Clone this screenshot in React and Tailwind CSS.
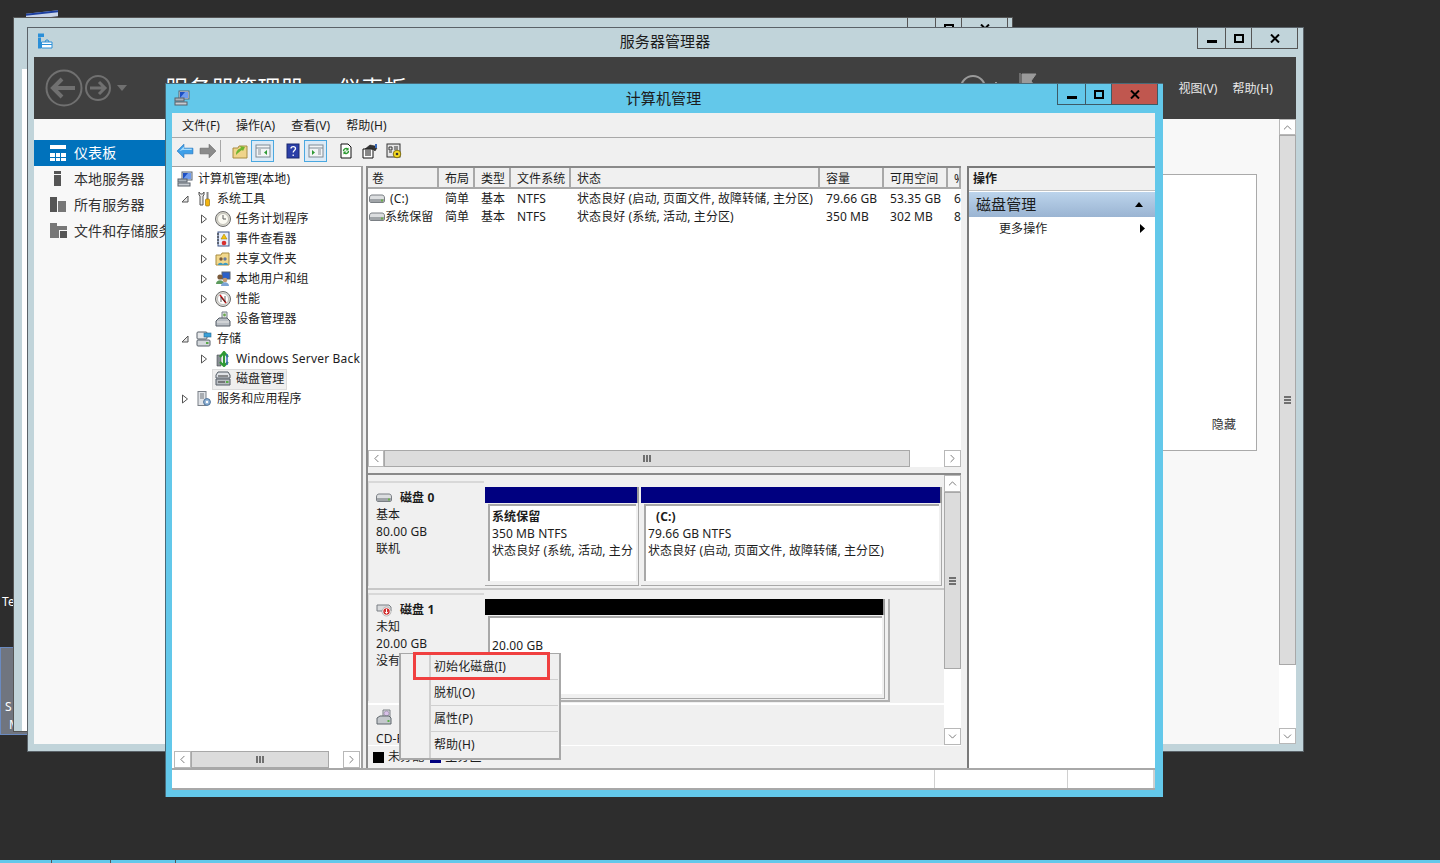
import { ChevronLeft, ChevronRight, ChevronUp, ChevronDown } from 'lucide-react'

const font = { fontFamily: '"Noto Sans", "Noto Sans CJK SC", sans-serif' }

const Svg = ({ size = 16, children, className = '' }) => (
  <svg width={size} height={size} viewBox="0 0 16 16" className={`shrink-0 ${className}`}>
    {children}
  </svg>
)

const ComputerIcon = () => (
  <Svg>
    <rect x="5" y="1" width="10" height="8" fill="#dfe6ee" stroke="#5a6470" />
    <rect x="6" y="2" width="8" height="6" fill="#1d4fc4" />
    <path d="M6 8l5-6h3v6z" fill="#6f9cf0" />
    <rect x="1" y="8" width="9" height="3" fill="#aab2ba" stroke="#59616a" />
    <rect x="1" y="12" width="12" height="3" fill="#c7ccd2" stroke="#59616a" />
  </Svg>
)
const ToolsIcon = () => (
  <Svg>
    <path d="M3 1v3l1 1v9h3V5l1-1V1L6.500 3h-2z" fill="#e8e8e8" stroke="#555" />
    <rect x="10.500" y="1" width="2" height="7" fill="#888" />
    <rect x="9.500" y="8" width="4" height="7" rx="1" fill="#f2b410" stroke="#8a6400" strokeWidth="0.6" />
  </Svg>
)
const ClockIcon = () => (
  <Svg>
    <circle cx="8" cy="8" r="7.500" fill="#d8d6cc" stroke="#6c6c6c" />
    <circle cx="8" cy="8" r="5.500" fill="#fbfaf2" stroke="#a8a8a0" strokeWidth="0.6" />
    <path d="M8 4v4h3" fill="none" stroke="#5c5c5c" />
  </Svg>
)
const EventIcon = () => (
  <Svg>
    <rect x="3" y="1" width="11" height="14" fill="#e8eefa" stroke="#3c5488" />
    <path d="M2 3h2M2 6h2M2 9h2M2 12h2" stroke="#222" />
    <path d="M9 3l3 5H6z" fill="#f4c20d" stroke="#9a7700" strokeWidth="0.5" />
    <circle cx="9" cy="12" r="2.300" fill="#d83030" />
  </Svg>
)
const ShareIcon = () => (
  <Svg>
    <path d="M1 4h5l1-2h7v12H1z" fill="#f2d88c" stroke="#a88c40" />
    <circle cx="6" cy="8" r="1.700" fill="#7a5a3a" />
    <circle cx="10" cy="8" r="1.700" fill="#6a7a9a" />
    <path d="M3 14c0-3 5-3 5 0zM8 14c0-3 5-3 5 0z" fill="#3f9ac0" />
  </Svg>
)
const UsersIcon = () => (
  <Svg>
    <rect x="7" y="1" width="8" height="7" fill="#2a5fc8" stroke="#5a6470" />
    <circle cx="5" cy="6" r="2.600" fill="#7a5a3a" />
    <path d="M1 13c0-5 8-5 8 0z" fill="#5d9a5d" />
    <circle cx="10" cy="9" r="2.300" fill="#c59a70" />
    <path d="M6 15c0-5 8-5 8 0z" fill="#7da4d4" />
  </Svg>
)
const PerfIcon = () => (
  <Svg>
    <circle cx="8" cy="8" r="7.500" fill="#dcdad4" stroke="#6a6a6a" />
    <circle cx="8" cy="8" r="5.500" fill="#fff" stroke="#a0a0a0" strokeWidth="0.6" />
    <path d="M5 4l6 8" stroke="#d01818" strokeWidth="1.600" />
    <path d="M6 11V6l4 5V5" fill="none" stroke="#222" strokeWidth="0.7" />
  </Svg>
)
const DeviceIcon = () => (
  <Svg>
    <path d="M7 1h5v7H7z" fill="#e4e6e8" stroke="#74808a" />
    <circle cx="9.500" cy="4" r="1.400" fill="#6aa84f" />
    <path d="M1 10l3-3h8l3 3v5H1z" fill="#b9bec4" stroke="#555d66" />
    <path d="M2 11h12" stroke="#e8e8e8" />
  </Svg>
)
const StorageIcon = () => (
  <Svg>
    <rect x="1" y="1" width="10" height="7" rx="1" fill="#e6e8ea" stroke="#59616a" />
    <rect x="8" y="2" width="7" height="4" fill="#3aa0d8" stroke="#2a6a90" strokeWidth="0.6" />
    <rect x="1" y="9" width="13" height="6" rx="1" fill="#d4d8dc" stroke="#59616a" />
    <rect x="10" y="11" width="2.500" height="2" fill="#58a848" />
  </Svg>
)
const BackupIcon = () => (
  <Svg>
    <path d="M2 4h4v11H2z" fill="#8a8f96" stroke="#44494f" strokeWidth="0.6" />
    <path d="M9 1v14M5 6l4-5 4 5M5 11l4 4 4-4" fill="none" stroke="#2f9a35" strokeWidth="2.200" />
    <path d="M12 3v11" stroke="#3868b8" strokeWidth="1.500" />
  </Svg>
)
const DiskMgmtIcon = () => (
  <Svg>
    <path d="M3 1h10l2 3v3H1V4z" fill="#dfe2e6" stroke="#555d66" />
    <path d="M1 8h14v6H1z" fill="#b9bdc2" stroke="#555d66" />
    <path d="M3 5h10M3 11h7" stroke="#333" />
    <rect x="11" y="10" width="2.500" height="2" fill="#5ab04a" />
  </Svg>
)
const ServicesIcon = () => (
  <Svg>
    <rect x="2" y="0.500" width="8" height="14" fill="#e0e3e7" stroke="#7a8088" />
    <path d="M4 3h4M4 5h4M4 7h4" stroke="#70767c" />
    <circle cx="11" cy="11" r="3.400" fill="#8fb2d6" stroke="#4d7298" />
    <circle cx="11" cy="11" r="1.200" fill="#fff" />
  </Svg>
)
const DriveIcon = ({ className = '' }) => (
  <Svg className={className}>
    <path d="M3 4h10c1.500 0 2.500 1 2.500 3v3c0 1-.5 1.500-1.500 1.500H2c-1 0-1.500-.5-1.500-1.500V7C.5 5 1.500 4 3 4z" fill="#dcdee0" stroke="#7a7f84" />
    <path d="M1 8h14v3H1z" fill="#a0a4a8" />
    <rect x="12" y="8.500" width="2" height="2" fill="#6ab04a" />
  </Svg>
)
const UnknownDiskIcon = () => (
  <Svg>
    <path d="M1 3h12l2 2v4H1z" fill="#d8dadc" stroke="#7a7f84" />
    <circle cx="10.500" cy="9.500" r="4.500" fill="#fff" stroke="#8a8a8a" strokeWidth="0.6" />
    <circle cx="10.500" cy="9.500" r="3.200" fill="#d02a2a" />
    <path d="M10.500 7v4M9 9.800l1.500 1.700 1.500-1.700" fill="none" stroke="#fff" />
  </Svg>
)
const CdIcon = () => (
  <Svg>
    <path d="M7 1h7v8H7z" fill="#e4e6e8" stroke="#7a7f84" />
    <circle cx="10.500" cy="4.500" r="2.500" fill="#d9c2e8" stroke="#8a7a9a" strokeWidth="0.6" />
    <path d="M1 9l3-2h9l2 2v6H1z" fill="#c4c8cc" stroke="#5f666c" />
    <rect x="11.500" y="11" width="2" height="2" fill="#5ab04a" />
  </Svg>
)

const BackArrow = () => (
  <Svg size={18}>
    <path d="M1 8l6-6v3.500h8v5H7V14z" fill="#3f9fe8" stroke="#1c71bd" strokeWidth="0.6" />
    <path d="M3 8l4-4v2h7v1H6z" fill="#a8dcfb" />
  </Svg>
)
const ForwardArrow = () => (
  <Svg size={18}>
    <path d="M15 8L9 2v3.500H1v5h8V14z" fill="#8b8b8b" stroke="#666" strokeWidth="0.6" />
  </Svg>
)
const UpFolder = () => (
  <Svg>
    <path d="M1 5h5l1-2h8v12H1z" fill="#f0d48a" stroke="#a88c40" />
    <path d="M4 12c0-4 2-6 5-7l-1-2 5 1-2 4-1-1c-2 1-4 3-6 5z" fill="#6eb52f" />
  </Svg>
)
const PaneIcon = ({ arrow }) => (
  <svg width="16" height="16" viewBox="0 0 16 16">
    <rect x="1" y="2" width="14" height="12" fill="#f2f4f6" stroke="#7f8a94" />
    <path d="M1 5h14" stroke="#7f8a94" />
    <path d={arrow === 'left' ? 'M3 7h3M3 9h3M3 11h3' : 'M10 7h3M10 9h3M10 11h3'} stroke="#8a8f96" />
    <path d={arrow === 'left' ? 'M12 7v5l-3-2.500z' : 'M4 7v5l3-2.500z'} fill="#2f9a35" />
  </svg>
)
const HelpBook = () => (
  <Svg>
    <rect x="2" y="1" width="12" height="14" fill="#2b3fa8" stroke="#1a2870" />
    <path d="M6 5.500c0-2.500 4.500-2.500 4.500 0 0 2-2.300 2-2.300 4M8.200 11.500v1.500" fill="none" stroke="#fff" strokeWidth="1.300" />
  </Svg>
)
const RefreshPage = () => (
  <Svg>
    <path d="M3 1h7l3 3v11H3z" fill="#fff" stroke="#111" />
    <path d="M5.500 8a2.500 2.500 0 0 1 4.500-1.500M10.500 8A2.500 2.500 0 0 1 6 9.500" fill="none" stroke="#2c9a30" strokeWidth="1.400" />
    <path d="M10.500 4.500v3h-3zM5.500 11.500v-3h3z" fill="#2c9a30" />
  </Svg>
)
const PropsIcon = () => (
  <Svg>
    <path d="M1 6h10v9H1z" fill="#fff" stroke="#111" />
    <path d="M3 8h6M3 10h6M3 12h6" stroke="#111" />
    <path d="M3 6l5-4 5 1 2 2-2 3-2-2z" fill="#333" stroke="#111" strokeWidth="0.5" />
    <rect x="13" y="1" width="2" height="4" fill="#3868b8" />
  </Svg>
)
const ExportIcon = () => (
  <Svg>
    <rect x="1" y="1" width="13" height="13" fill="#e6e6e6" stroke="#333" />
    <path d="M3 4h3v3H3zM8 4h4M8 6h4M3 9h3" stroke="#333" fill="none" />
    <circle cx="11" cy="11" r="3.800" fill="#f4d820" stroke="#6c5c00" strokeWidth="0.8" />
    <circle cx="11" cy="11" r="1.300" fill="#333" />
  </Svg>
)

const ServerToolboxIcon = () => (
  <Svg>
    <rect x="1" y="0.500" width="6" height="3.500" fill="#2a8fd8" />
    <rect x="1" y="4.500" width="3" height="11" fill="#2a8fd8" />
    <path d="M4.500 9h10.500v6H4.500z" fill="#fff" stroke="#2a8fd8" />
    <path d="M8 9l1-2h2l1 2M4.500 11.500h10.500" fill="none" stroke="#2a8fd8" />
  </Svg>
)

const Triangle = ({ open }) =>
  open ? (
    <svg width="8" height="8" viewBox="0 0 8 8"><path d="M7 1v6H1z" fill="#e8e8e8" stroke="#555" /></svg>
  ) : (
    <svg width="8" height="10" viewBox="0 0 8 10"><path d="M1.500 1l5 4-5 4z" fill="#fff" stroke="#555" /></svg>
  )

const WinControls = ({ close = 'bg-transparent', border }) => (
  <div className={`flex h-[21px] border-x border-b ${border}`}>
    <div className={`flex w-[28px] items-end justify-center border-r pb-[5px] ${border}`}>
      <div className="h-[3px] w-[10px] bg-black" />
    </div>
    <div className={`flex w-[26px] items-center justify-center border-r ${border}`}>
      <div className="h-[9px] w-[10px] border-2 border-black" />
    </div>
    <div className={`flex w-[45px] items-center justify-center ${close}`}>
      <svg width="10" height="9" viewBox="0 0 10 9"><path d="M1 0.500l8 8M9 0.500l-8 8" stroke="#000" strokeWidth="2" /></svg>
    </div>
  </div>
)

const ScrollBtn = ({ children, className = '' }) => (
  <div className={`flex h-[16px] w-[16px] shrink-0 items-center justify-center border border-[#b8b8b8] bg-white text-[#606060] ${className}`}>
    {children}
  </div>
)

const Grip = ({ vertical }) =>
  vertical ? (
    <div className="flex flex-col gap-[1px]">
      <div className="h-[2px] w-[7px] bg-[#707070]" />
      <div className="h-[2px] w-[7px] bg-[#707070]" />
      <div className="h-[2px] w-[7px] bg-[#707070]" />
    </div>
  ) : (
    <div className="flex gap-[1px]">
      <div className="h-[7px] w-[2px] bg-[#707070]" />
      <div className="h-[7px] w-[2px] bg-[#707070]" />
      <div className="h-[7px] w-[2px] bg-[#707070]" />
    </div>
  )

const treeRows = [
  { level: 0, icon: ComputerIcon, label: '计算机管理(本地)' },
  { level: 1, arrow: 'open', icon: ToolsIcon, label: '系统工具' },
  { level: 2, arrow: 'closed', icon: ClockIcon, label: '任务计划程序' },
  { level: 2, arrow: 'closed', icon: EventIcon, label: '事件查看器' },
  { level: 2, arrow: 'closed', icon: ShareIcon, label: '共享文件夹' },
  { level: 2, arrow: 'closed', icon: UsersIcon, label: '本地用户和组' },
  { level: 2, arrow: 'closed', icon: PerfIcon, label: '性能' },
  { level: 2, icon: DeviceIcon, label: '设备管理器' },
  { level: 1, arrow: 'open', icon: StorageIcon, label: '存储' },
  { level: 2, arrow: 'closed', icon: BackupIcon, label: 'Windows Server Back' },
  { level: 2, icon: DiskMgmtIcon, label: '磁盘管理', selected: true },
  { level: 1, arrow: 'closed', icon: ServicesIcon, label: '服务和应用程序' },
]

const levelPad = { 0: 'pl-[2px]', 1: 'pl-[8px]', 2: 'pl-[27px]' }

const columns = [
  { label: '卷', width: 'w-[71px]' },
  { label: '布局', width: 'w-[36px]' },
  { label: '类型', width: 'w-[36px]' },
  { label: '文件系统', width: 'w-[60px]' },
  { label: '状态', width: 'w-[249px]' },
  { label: '容量', width: 'w-[64px]' },
  { label: '可用空间', width: 'w-[64px]' },
  { label: '%', width: 'w-[13px]' },
]

const volumes = [
  ['(C:)', '简单', '基本', 'NTFS', '状态良好 (启动, 页面文件, 故障转储, 主分区)', '79.66 GB', '53.35 GB', '6'],
  ['系统保留', '简单', '基本', 'NTFS', '状态良好 (系统, 活动, 主分区)', '350 MB', '302 MB', '8'],
]

const Partition = ({ width, barColor = 'bg-[#000080]', height = 'h-[83px]', children }) => (
  <div className={`flex shrink-0 flex-col ${width}`}>
    <div className={`h-[16px] ${barColor} border-r-2 border-[#9a9a9a]`} />
    <div className={`${height} border-r border-b border-[#a8a8a8] bg-[#f0f0f0] pl-[3px] pr-[2px] pt-[1px]`}>
      <div className="h-[calc(100%-4px)] overflow-hidden whitespace-nowrap border-t-2 border-l-2 border-[#a8a8a8] bg-white pl-[2px] leading-[17px]">
        {children}
      </div>
    </div>
  </div>
)

const DiskLabel = ({ icon, name, lines, top }) => (
  <div className={`mb-[2px] w-[116px] shrink-0 border-l border-t-2 border-[#d8d8d8] bg-[#f0f0f0] pl-[7px] pt-[6px] leading-[17px] ${top}`}>
    <div className="flex h-[17px] items-center">
      {icon}
      <span className="ml-[8px] font-bold">{name}</span>
    </div>
    {lines.map((line) => (
      <div key={line}>{line}</div>
    ))}
  </div>
)

const menuItems = ['初始化磁盘(I)', '脱机(O)', '属性(P)', '帮助(H)']

export default function App() {
  return (
    <div className="relative h-[863px] w-[1440px] overflow-hidden bg-[#2d2d2d] text-[12px] tracking-[0.1px] text-[#1c1c1c]" style={font}>
      {/* desktop leftovers */}
      <div className="absolute left-[26px] top-[12px] h-[6px] w-[32px] -skew-y-6 border-t-2 border-[#1c3fa0] bg-[#c8d4e8]" />
      <div className="absolute left-[2px] top-[593px] text-white">Te</div>
      <div className="absolute left-0 top-[647px] h-[88px] w-[30px] border border-[#6a8ac0] bg-[#70757f] pl-[4px] pt-[50px] leading-[18px] text-white">
        <div>S</div>
        <div className="pl-[4px]">M</div>
      </div>
      <div className="absolute bottom-0 left-0 flex h-[3px] w-full gap-[1px] bg-[#555]">
        <div className="w-[51px] bg-[#63c8ea]" />
        <div className="w-[58px] bg-[#63c8ea]" />
        <div className="w-[64px] bg-[#63c8ea]" />
        <div className="flex-1 bg-[#63c8ea]" />
      </div>

      {/* window behind */}
      <div className="absolute left-[13px] top-[17px] flex h-[715px] w-[1000px] flex-col border border-[#555] bg-[#c1d4da] pl-[8px]">
        <div className="ml-auto mr-[4px] w-[101px]">
          <WinControls border="border-[#555]" />
        </div>
        <div className="mt-[30px] flex-1 bg-white" />
      </div>

      {/* server manager */}
      <div className="absolute left-[27px] top-[27px] flex h-[725px] w-[1277px] flex-col border border-[#5a6268] bg-[#c1d4da] pb-[7px] pl-[6px] pr-[7px]">
        <div className="grid h-[29px] shrink-0 grid-cols-[1fr_auto_1fr]">
          <div className="flex items-start pl-[3px] pt-[5px]">
            <ServerToolboxIcon />
          </div>
          <div className="pt-[3px] text-[15px] leading-[20px]">服务器管理器</div>
          <div className="-mr-[2px] flex justify-end">
            <WinControls border="border-[#555]" />
          </div>
        </div>
        <div className="flex h-[62px] shrink-0 items-center bg-[#404040] pl-[11px] text-[#e8e8e8]">
          <svg width="38" height="38" viewBox="0 0 38 38">
            <circle cx="19" cy="19" r="17.500" fill="none" stroke="#707070" strokeWidth="2" />
            <path d="M8 19h22M17 10l-9 9 9 9" fill="none" stroke="#707070" strokeWidth="4" />
          </svg>
          <svg width="28" height="28" viewBox="0 0 28 28" className="ml-[1px]">
            <circle cx="14" cy="14" r="12" fill="none" stroke="#707070" strokeWidth="2" />
            <path d="M6 14h15M15 8l6 6-6 6" fill="none" stroke="#707070" strokeWidth="3" />
          </svg>
          <svg width="12" height="8" viewBox="0 0 12 8" className="ml-[4px]">
            <path d="M1 1h10L6 7z" fill="#707070" />
          </svg>
          <div className="ml-[37px] flex whitespace-nowrap text-[23px] leading-[30px] text-white">
            <span>服务器管理器</span>
            <span className="ml-[34px]">仪表板</span>
          </div>
          <div className="ml-auto flex items-center pr-[23px] pt-[1px]">
            <svg width="28" height="28" viewBox="0 0 28 28" className="-mt-[1px]">
              <circle cx="14" cy="14" r="12" fill="none" stroke="#9a9a9a" strokeWidth="2" />
            </svg>
            <div className="ml-[8px] h-[14px] w-[2px] bg-[#9a9a9a]" />
            <svg width="18" height="30" viewBox="0 0 18 30" className="-mt-[1px] ml-[22px]">
              <path d="M1 0v30M3 1h14l-5 7 5 7H3z" fill="#9a9a9a" stroke="#9a9a9a" />
            </svg>
            <span className="ml-[142px]">视图(V)</span>
            <span className="ml-[15px]">帮助(H)</span>
          </div>
        </div>
        <div className="flex min-h-0 flex-1 bg-[#f8f8f8]">
          <div className="w-[131px] shrink-0 overflow-hidden whitespace-nowrap pt-[21px] text-[14px] text-[#333]">
            <div className="mb-[-1px] flex h-[26px] items-center gap-[8px] bg-[#0072bc] pl-[16px] text-white">
              <div className="grid h-[16px] w-[16px] shrink-0 grid-cols-3 gap-[1px]">
                <div className="col-span-3 h-[4px] bg-white" />
                <div className="bg-white" />
                <div className="bg-white" />
                <div className="bg-white" />
                <div className="bg-white" />
                <div className="bg-white" />
                <div className="bg-white" />
              </div>
              <span className="-mt-[2px]">仪表板</span>
            </div>
            <div className="flex h-[26px] items-center gap-[13px] pl-[20px]">
              <div className="flex w-[7px] shrink-0 flex-col gap-[1px]">
                <div className="h-[3px] bg-[#555]" />
                <div className="h-[11px] bg-[#555]" />
              </div>
              <span>本地服务器</span>
            </div>
            <div className="flex h-[26px] items-center gap-[8px] pl-[16px]">
              <div className="flex w-[16px] shrink-0 gap-[1px]">
                <div className="h-[15px] w-[7px] bg-[#555]" />
                <div className="mt-[4px] h-[11px] w-[8px] bg-[#777]" />
              </div>
              <span>所有服务器</span>
            </div>
            <div className="flex h-[26px] items-center gap-[7px] pl-[16px]">
              <svg width="17" height="15" viewBox="0 0 17 15" className="shrink-0">
                <path d="M0 0h7v3h10v4H9v8H0z" fill="#777" />
                <path d="M10 8h7v7h-7z" fill="#555" />
              </svg>
              <span>文件和存储服务</span>
            </div>
          </div>
          <div className="flex min-w-0 flex-1 items-start justify-end pr-[22px] pt-[55px]">
            <div className="flex h-[277px] w-[200px] items-end justify-end border border-[#aaa] bg-white pb-[16px] pr-[20px] text-[#333]">
              隐藏
            </div>
          </div>
          <div className="flex w-[17px] shrink-0 flex-col bg-white">
            <ScrollBtn className="w-[17px]!"><ChevronUp size={13} strokeWidth={1.5} /></ScrollBtn>
            <div className="flex h-[530px] items-center justify-center border border-[#a8a8a8] bg-[#dcdcdc]">
              <Grip vertical />
            </div>
            <div className="flex-1" />
            <ScrollBtn className="w-[17px]!"><ChevronDown size={13} strokeWidth={1.5} /></ScrollBtn>
          </div>
        </div>
      </div>

      {/* computer management */}
      <div className="absolute left-[165px] top-[83px] flex h-[714px] w-[998px] flex-col border-l border-t border-[#4a6a78] bg-[#63c8ea] pl-[6px] pr-[8px] pb-[7px]">
        <div className="grid h-[29px] shrink-0 grid-cols-[1fr_auto_1fr]">
          <div className="flex items-start pl-[2px] pt-[6px]">
            <ComputerIcon />
          </div>
          <div className="pt-[4px] text-[15px] leading-[21px]">计算机管理</div>
          <div className="-mr-[3px] flex justify-end">
            <WinControls border="border-[#3d5a66]" close="bg-[#c0574f]" />
          </div>
        </div>
        <div className="flex min-h-0 flex-1 flex-col bg-[#f0f0f0]">
          {/* menu */}
          <div className="flex h-[25px] shrink-0 items-center gap-[16px] border-b border-[#a8a8a8] pl-[10px] pt-[1px]">
            <span>文件(F)</span>
            <span>操作(A)</span>
            <span>查看(V)</span>
            <span>帮助(H)</span>
          </div>
          {/* toolbar */}
          <div className="flex h-[28px] shrink-0 items-center pb-[3px] pl-[4px]">
            <BackArrow />
            <div className="ml-[5px]"><ForwardArrow /></div>
            <div className="ml-[3px] h-[22px] w-px bg-[#a8a8a8]" />
            <div className="ml-[11px]"><UpFolder /></div>
            <div className="ml-[3px] flex h-[22px] w-[23px] items-center justify-center border border-[#4aa8e0] bg-[#dceaf6]"><PaneIcon arrow="left" /></div>
            <div className="ml-[11px]"><HelpBook /></div>
            <div className="ml-[3px] flex h-[22px] w-[23px] items-center justify-center border border-[#4aa8e0] bg-[#dceaf6]"><PaneIcon arrow="right" /></div>
            <div className="ml-[11px]"><RefreshPage /></div>
            <div className="ml-[8px]"><PropsIcon /></div>
            <div className="ml-[8px]"><ExportIcon /></div>
          </div>
          {/* panes */}
          <div className="flex min-h-0 flex-1">
            <div className="flex w-[191px] shrink-0 flex-col border-r-2 border-t border-[#a0a0a0] bg-white pl-px">
              <div className="min-h-0 flex-1 overflow-hidden pt-[2px]">
                {treeRows.map((row) => {
                  const Icon = row.icon
                  return (
                    <div key={row.label} className={`flex h-[20px] items-center whitespace-nowrap ${levelPad[row.level]}`}>
                      {row.level > 0 && (
                        <div className="flex w-[13px] shrink-0 items-center">
                          {row.arrow && <Triangle open={row.arrow === 'open'} />}
                        </div>
                      )}
                      <div className={`flex h-[19px] items-center gap-[5px] pl-[2px] pr-[2px] ${row.selected ? 'bg-[#efefef] outline outline-[#dcdcdc]' : ''}`}>
                        <Icon />
                        <span className={row.label.startsWith('Windows') ? 'tracking-[0.2px]' : ''}>{row.label}</span>
                      </div>
                    </div>
                  )
                })}
              </div>
              <div className="flex h-[17px] shrink-0 bg-white pl-px pr-px">
                <ScrollBtn className="h-[17px]! w-[17px]!"><ChevronLeft size={13} strokeWidth={1.5} /></ScrollBtn>
                <div className="flex w-[138px] items-center justify-center border border-[#a8a8a8] bg-[#dcdcdc]"><Grip /></div>
                <div className="flex-1" />
                <ScrollBtn className="h-[17px]! w-[17px]!"><ChevronRight size={13} strokeWidth={1.5} /></ScrollBtn>
              </div>
            </div>

            <div className="ml-[3px] flex w-[595px] shrink-0 flex-col border-l-2 border-t-2 border-[#8a8a8a] bg-white">
              {/* volume list */}
              <div className="flex h-[299px] shrink-0 flex-col">
                <div className="flex h-[21px] shrink-0 overflow-hidden bg-[#f0f0f0]">
                  {columns.map((col, j) => (
                    <div key={col.label} className={`${col.width} shrink-0 overflow-hidden border-b-2 border-r-2 border-[#a8a8a8] leading-[22px] ${j === 0 ? 'pl-[4px]' : 'pl-[6px]'}`}>
                      {col.label}
                    </div>
                  ))}
                </div>
                <div className="flex-1 overflow-hidden pt-[1px]">
                  {volumes.map((vol, i) => (
                    <div key={vol[0]} className="flex h-[18px] items-center whitespace-nowrap">
                      {vol.map((cell, j) => (
                        <div key={j} className={`${columns[j].width} flex shrink-0 items-center overflow-hidden ${j === 0 ? 'pl-[1px]' : 'pl-[6px]'}`}>
                          {j === 0 && <DriveIcon />}
                          <span className={j === 0 && i === 0 ? 'ml-[5px]' : ''}>{cell}</span>
                        </div>
                      ))}
                    </div>
                  ))}
                </div>
                <div className="flex h-[17px] shrink-0">
                  <ScrollBtn className="h-[17px]!"><ChevronLeft size={13} strokeWidth={1.5} /></ScrollBtn>
                  <div className="flex w-[526px] items-center justify-center border border-[#a8a8a8] bg-[#dcdcdc]"><Grip /></div>
                  <div className="flex-1" />
                  <ScrollBtn className="h-[17px]! w-[17px]!"><ChevronRight size={13} strokeWidth={1.5} /></ScrollBtn>
                </div>
              </div>
              <div className="h-[8px] shrink-0 border-b-2 border-[#8a8a8a] bg-[#f0f0f0]" />

              {/* disk map */}
              <div className="relative flex min-h-0 flex-1 flex-col bg-[#f0f0f0]">
                <div className="flex h-[270px] shrink-0">
                  <div className="flex min-w-0 flex-1 flex-col">
                    <div className="flex h-[115px] shrink-0 border-b-2 border-[#c8c8c8]">
                      <DiskLabel icon={<DriveIcon />} name="磁盘 0" lines={['基本', '80.00 GB', '联机']} top="mt-[6px]" />
                      <div className="flex gap-[2px] pl-[1px] pt-[12px]">
                        <Partition width="w-[154px]">
                          <div className="pt-[2px]">
                            <div className="font-bold">系统保留</div>
                            <div>350 MB NTFS</div>
                            <div>状态良好 (系统, 活动, 主分</div>
                          </div>
                        </Partition>
                        <Partition width="w-[301px]">
                          <div className="pt-[2px]">
                            <div className="pl-[8px] font-bold">(C:)</div>
                            <div>79.66 GB NTFS</div>
                            <div>状态良好 (启动, 页面文件, 故障转储, 主分区)</div>
                          </div>
                        </Partition>
                      </div>
                    </div>
                    <div className="flex h-[115px] shrink-0 border-b-2 border-white">
                      <DiskLabel icon={<UnknownDiskIcon />} name="磁盘 1" lines={['未知', '20.00 GB', '没有初始化']} top="mt-[3px]" />
                      <div className="pl-[1px] pt-[9px]">
                        <div className="border-b-2 border-r-2 border-[#b0b0b0] pb-[1px] pr-[3px]">
                          <Partition width="w-[400px]" barColor="bg-black" height="h-[84px]">
                            <div className="pt-[19px]">20.00 GB</div>
                          </Partition>
                        </div>
                      </div>
                    </div>
                    <div className="flex-1 pl-[8px] pt-[4px] leading-[17px]">
                      <CdIcon />
                      <div className="mt-[5px]">CD-ROM 0</div>
                    </div>
                  </div>
                  <div className="flex w-[17px] shrink-0 flex-col bg-white">
                    <ScrollBtn className="h-[17px]! w-[17px]!"><ChevronUp size={13} strokeWidth={1.5} /></ScrollBtn>
                    <div className="flex h-[177px] items-center justify-center border border-[#a8a8a8] bg-[#dcdcdc]"><Grip vertical /></div>
                    <div className="flex-1" />
                    <ScrollBtn className="h-[17px]! w-[17px]!"><ChevronDown size={13} strokeWidth={1.5} /></ScrollBtn>
                  </div>
                </div>
                <div className="flex h-[20px] items-center border-t border-white pl-[5px] pt-[3px]">
                  <div className="h-[11px] w-[11px] bg-black" />
                  <span className="ml-[4px]">未分配</span>
                  <div className="ml-[6px] h-[11px] w-[11px] bg-[#000080]" />
                  <span className="ml-[4px]">主分区</span>
                </div>

                {/* context menu */}
                <div className="absolute left-[31px] top-[178px] z-10 w-[162px] border-2 border-t border-[#a8a8a8] bg-[#f0f0f0]">
                  {menuItems.map((item) => (
                    <div key={item} className="flex h-[26px] pl-[28px]">
                      <div className="flex flex-1 items-center border-l-2 border-[#d0d0d0] pl-[3px]">
                        <span>{item}</span>
                      </div>
                    </div>
                  ))}
                  <div className="pointer-events-none absolute left-[29px] right-[1px] top-[25px] h-px bg-[#d0d0d0]" />
                  <div className="pointer-events-none absolute left-[29px] right-[1px] top-[51px] h-px bg-[#d0d0d0]" />
                  <div className="pointer-events-none absolute left-[29px] right-[1px] top-[77px] h-px bg-[#d0d0d0]" />
                  <div className="pointer-events-none absolute -top-[2px] left-[12px] h-[28px] w-[137px] border-[3px] border-[#f04040]" />
                </div>
              </div>
            </div>

            {/* actions */}
            <div className="ml-[6px] flex min-w-0 flex-1 flex-col border-l-2 border-t-2 border-[#7a7a7a] bg-white">
              <div className="flex h-[23px] shrink-0 items-center border-b border-[#c0c0c0] bg-[#f0f0f0] pl-[4px] font-bold">操作</div>
              <div className="mt-[1px] flex h-[25px] shrink-0 items-center justify-between bg-gradient-to-b from-[#bcd4ec] to-[#9ab4d2] pl-[7px] pr-[12px] text-[15px]">
                <span>磁盘管理</span>
                <svg width="8" height="5" viewBox="0 0 8 5"><path d="M0 5l4-5 4 5z" fill="#000" /></svg>
              </div>
              <div className="flex h-[23px] shrink-0 items-center justify-between pl-[30px] pr-[10px]">
                <span>更多操作</span>
                <svg width="5" height="9" viewBox="0 0 5 9"><path d="M0 0l5 4.500L0 9z" fill="#000" /></svg>
              </div>
            </div>
          </div>
          {/* status bar */}
          <div className="flex h-[22px] shrink-0 border-b-2 border-t-2 border-[#a8a8a8] bg-white">
            <div className="w-[763px] border-r border-[#d0d0d0]" />
            <div className="w-[133px] border-r border-[#d0d0d0]" />
            <div className="flex-1 border-r-2 border-[#d0d0d0]" />
          </div>
        </div>
      </div>
    </div>
  )
}
